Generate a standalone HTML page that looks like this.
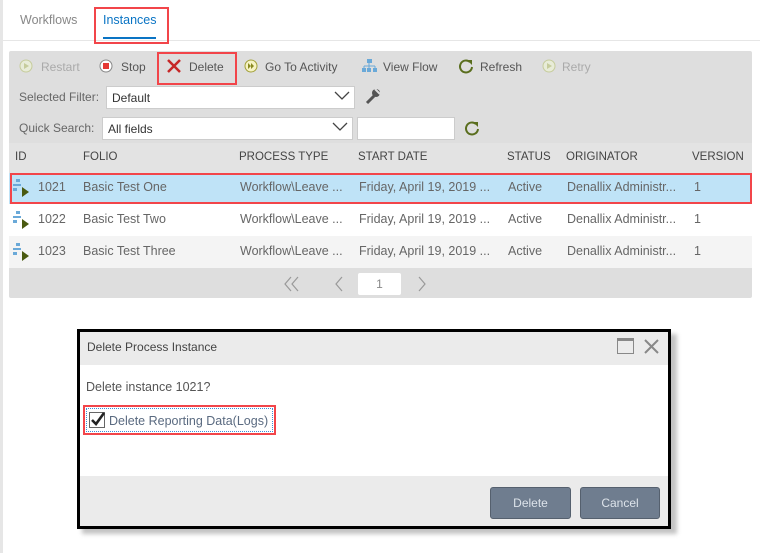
<!DOCTYPE html>
<html><head><meta charset="utf-8"><style>
*{margin:0;padding:0;box-sizing:border-box}
body{width:760px;height:553px;background:#fff;font-family:"Liberation Sans",sans-serif;font-size:12px;color:#555;position:relative;overflow:hidden}
.a{position:absolute;white-space:nowrap}
.tb{color:#555;font-size:12px}
.dis{color:#aaa}
.hd{color:#444;font-size:11.5px}
.c{color:#666;font-size:12.5px}
.sel{background:#fff;border:1px solid #ccc}
</style></head><body>
<div class="a" style="left:0;top:0;width:3px;height:553px;background:#e6e6e6"></div>
<div class="a" style="left:20px;top:13px;color:#888;font-size:12.5px">Workflows</div>
<div class="a" style="left:103px;top:13px;color:#0a74c4;font-size:12.5px">Instances</div>
<div class="a" style="left:0;top:40px;width:760px;height:1px;background:#e6e6e6"></div>
<div class="a" style="left:103px;top:37px;width:53px;height:2px;background:#0a74c4"></div>
<div class="a" style="left:94px;top:7px;width:75px;height:37px;border:2px solid #f2454a"></div>

<div class="a" style="left:9px;top:51px;width:743px;height:247px;background:#dedede;border-radius:2px"></div>
<svg class="a" style="left:19px;top:59px" width="14" height="14"><circle cx="7" cy="7" r="6" fill="#e8ecd8" stroke="#c6cc9c"/><path d="M5 4l5 3-5 3z" fill="#c6cc9c"/></svg>
<div class="a tb dis" style="left:41px;top:60px">Restart</div>
<svg class="a" style="left:99px;top:59px" width="14" height="14"><circle cx="7" cy="7" r="6" fill="#fff" stroke="#888"/><rect x="4" y="4" width="6" height="6" fill="#e53935"/></svg>
<div class="a tb" style="left:121px;top:60px">Stop</div>
<svg class="a" style="left:166px;top:58px" width="16" height="16"><path d="M2 2L14 14M14 2L2 14" stroke="#c62828" stroke-width="2.5"/></svg>
<div class="a tb" style="left:189px;top:60px">Delete</div>
<div class="a" style="left:157px;top:52px;width:80px;height:33px;border:2px solid #f2454a"></div>
<svg class="a" style="left:244px;top:59px" width="14" height="14"><circle cx="7" cy="7" r="6" fill="#f6f3c4" stroke="#a2a038"/><path d="M4 4l3 3-3 3zM7 4l3 3-3 3z" fill="#8a8a20"/></svg>
<div class="a tb" style="left:265px;top:60px">Go To Activity</div>
<svg class="a" style="left:361px;top:58px" width="16" height="16"><rect x="6" y="1" width="5" height="4" fill="#6aa9d8"/><path d="M8 5v3M3 8h11M3 8v2M8 8v2M14 8v2" stroke="#6aa9d8"/><rect x="1" y="10" width="4" height="4" fill="#6aa9d8"/><rect x="6" y="10" width="4" height="4" fill="#6aa9d8"/><rect x="12" y="10" width="4" height="4" fill="#6aa9d8"/></svg>
<div class="a tb" style="left:383px;top:60px">View Flow</div>
<svg class="a" style="left:458px;top:58px" width="16" height="16"><path d="M12 4A6 6 0 1 0 14 9" fill="none" stroke="#5a6e1e" stroke-width="2"/><path d="M9 2h5v5z" fill="#5a6e1e"/></svg>
<div class="a tb" style="left:480px;top:60px">Refresh</div>
<svg class="a" style="left:542px;top:59px" width="14" height="14"><circle cx="7" cy="7" r="6" fill="#e8ecd8" stroke="#c6cc9c"/><path d="M5 4l5 3-5 3z" fill="#c6cc9c"/></svg>
<div class="a tb dis" style="left:562px;top:60px">Retry</div>
<div class="a tb" style="left:19px;top:90px;color:#666">Selected Filter:</div>
<div class="a sel" style="left:106px;top:86px;width:249px;height:23px"></div>
<div class="a" style="left:112px;top:91px;color:#333">Default</div>
<svg class="a" style="left:334px;top:91px" width="16" height="10"><path d="M1 1l7 7 7-7" fill="none" stroke="#444" stroke-width="1.3"/></svg>
<svg class="a" style="left:364px;top:88px" width="17" height="17"><path d="M3 15l7-7" stroke="#555" stroke-width="3"/><circle cx="12" cy="5" r="4" fill="#555"/><path d="M11 1l5 5" stroke="#dedede" stroke-width="2"/></svg>
<div class="a tb" style="left:19px;top:121px;color:#666">Quick Search:</div>
<div class="a sel" style="left:102px;top:117px;width:251px;height:23px"></div>
<div class="a" style="left:108px;top:122px;color:#333">All fields</div>
<svg class="a" style="left:332px;top:122px" width="16" height="10"><path d="M1 1l7 7 7-7" fill="none" stroke="#444" stroke-width="1.3"/></svg>
<div class="a sel" style="left:357px;top:117px;width:98px;height:23px"></div>
<svg class="a" style="left:464px;top:120px" width="16" height="16"><path d="M12 4A6 6 0 1 0 14 9" fill="none" stroke="#5a6e1e" stroke-width="2"/><path d="M9 2h5v5z" fill="#5a6e1e"/></svg>
<div class="a" style="left:9px;top:143px;width:743px;height:30px;background:#e3e3e3"></div>
<div class="a hd" style="left:15px;top:151px">ID</div>
<div class="a hd" style="left:83px;top:151px">FOLIO</div>
<div class="a hd" style="left:239px;top:151px">PROCESS TYPE</div>
<div class="a hd" style="left:358px;top:151px">START DATE</div>
<div class="a hd" style="left:507px;top:151px">STATUS</div>
<div class="a hd" style="left:566px;top:151px">ORIGINATOR</div>
<div class="a hd" style="left:692px;top:151px">VERSION</div>

<div class="a" style="left:9px;top:173px;width:743px;height:31px;background:#bfe3f7"></div>
<div class="a" style="left:9px;top:204px;width:743px;height:32px;background:#fff"></div>
<div class="a" style="left:9px;top:236px;width:743px;height:32px;background:#f4f4f4"></div>
<div class="a" style="left:10px;top:173px;width:742px;height:31px;border:2px solid #f2454a"></div>

<svg class="a" style="left:12px;top:179px" width="18" height="18"><rect x="4" y="0" width="4" height="3" fill="#6aa9d8"/><rect x="1" y="5" width="8" height="2" fill="#6aa9d8"/><rect x="1" y="9" width="4" height="3" fill="#6aa9d8"/><path d="M10 8l7 5-7 5z" fill="#4a5a10"/></svg>
<div class="a c" style="left:38px;top:180px">1021</div><div class="a c" style="left:83px;top:180px">Basic Test One</div><div class="a c" style="left:240px;top:180px">Workflow\Leave ...</div><div class="a c" style="left:359px;top:180px">Friday, April 19, 2019 ...</div><div class="a c" style="left:508px;top:180px">Active</div><div class="a c" style="left:567px;top:180px">Denallix Administr...</div><div class="a c" style="left:694px;top:180px">1</div>
<svg class="a" style="left:12px;top:211px" width="18" height="18"><rect x="4" y="0" width="4" height="3" fill="#6aa9d8"/><rect x="1" y="5" width="8" height="2" fill="#6aa9d8"/><rect x="1" y="9" width="4" height="3" fill="#6aa9d8"/><path d="M10 8l7 5-7 5z" fill="#4a5a10"/></svg>
<div class="a c" style="left:38px;top:212px">1022</div><div class="a c" style="left:83px;top:212px">Basic Test Two</div><div class="a c" style="left:240px;top:212px">Workflow\Leave ...</div><div class="a c" style="left:359px;top:212px">Friday, April 19, 2019 ...</div><div class="a c" style="left:508px;top:212px">Active</div><div class="a c" style="left:567px;top:212px">Denallix Administr...</div><div class="a c" style="left:694px;top:212px">1</div>
<svg class="a" style="left:12px;top:243px" width="18" height="18"><rect x="4" y="0" width="4" height="3" fill="#6aa9d8"/><rect x="1" y="5" width="8" height="2" fill="#6aa9d8"/><rect x="1" y="9" width="4" height="3" fill="#6aa9d8"/><path d="M10 8l7 5-7 5z" fill="#4a5a10"/></svg>
<div class="a c" style="left:38px;top:244px">1023</div><div class="a c" style="left:83px;top:244px">Basic Test Three</div><div class="a c" style="left:240px;top:244px">Workflow\Leave ...</div><div class="a c" style="left:359px;top:244px">Friday, April 19, 2019 ...</div><div class="a c" style="left:508px;top:244px">Active</div><div class="a c" style="left:567px;top:244px">Denallix Administr...</div><div class="a c" style="left:694px;top:244px">1</div>
<svg class="a" style="left:283px;top:276px" width="18" height="16"><path d="M8 1L2 8l6 7M15 1L9 8l6 7" fill="none" stroke="#999" stroke-width="1.2"/></svg>
<svg class="a" style="left:334px;top:276px" width="10" height="16"><path d="M8 1L2 8l6 7" fill="none" stroke="#999" stroke-width="1.2"/></svg>
<div class="a" style="left:358px;top:273px;width:43px;height:22px;background:#fff;border-radius:2px;text-align:center;line-height:22px;color:#888">1</div>
<svg class="a" style="left:417px;top:276px" width="10" height="16"><path d="M2 1l6 7-6 7" fill="none" stroke="#999" stroke-width="1.2"/></svg>

<div class="a" style="left:82px;top:334px;width:595px;height:200px;background:#888;opacity:.5;filter:blur(2px)"></div>
<div class="a" style="left:77px;top:329px;width:594px;height:200px;background:#fff;border:3px solid #000"></div>
<div class="a" style="left:80px;top:332px;width:588px;height:33px;background:#ebebeb"></div>
<div class="a" style="left:87px;top:340px;color:#444;font-size:12px">Delete Process Instance</div>
<div class="a" style="left:617px;top:338px;width:17px;height:16px;border:1.5px solid #888;border-top-width:3px"></div>
<svg class="a" style="left:643px;top:338px" width="17" height="17"><path d="M2 2l13 13M15 2L2 15" stroke="#888" stroke-width="2"/></svg>
<div class="a" style="left:86px;top:380px;color:#555;font-size:12.5px">Delete instance 1021?</div>
<div class="a" style="left:83px;top:405px;width:193px;height:30px;border:2px solid #f2454a"></div>
<div class="a" style="left:86px;top:408px;width:187px;height:24px;border:1px dotted #3a8fd8"></div>
<div class="a" style="left:89px;top:412px;width:16px;height:16px;border:1px solid #666;background:#fff"></div>
<svg class="a" style="left:89px;top:411px" width="17" height="17"><path d="M3 9l4 4 8-11" fill="none" stroke="#222" stroke-width="2.6"/></svg>
<div class="a" style="left:109px;top:414px;color:#5a6a80;font-size:12.5px">Delete Reporting Data(Logs)</div>
<div class="a" style="left:80px;top:476px;width:588px;height:50px;background:#ebebeb"></div>
<div class="a" style="left:490px;top:487px;width:81px;height:32px;background:#6f7d8f;border:1px solid #55606e;border-radius:3px;color:#dde3ea;text-align:center;line-height:30px">Delete</div>
<div class="a" style="left:580px;top:487px;width:80px;height:32px;background:#6f7d8f;border:1px solid #55606e;border-radius:3px;color:#dde3ea;text-align:center;line-height:30px">Cancel</div>
</body></html>
